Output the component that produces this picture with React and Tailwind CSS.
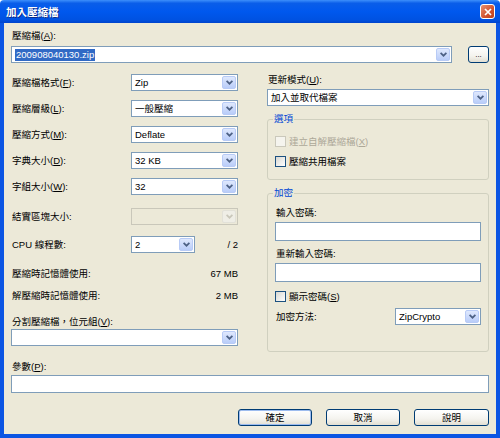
import React from "react";

function Chevron({ disabled }) {
  return (
    <svg width="7" height="5" viewBox="0 0 7 5">
      <path
        d="M0.6 0.8 L3.5 3.7 L6.4 0.8"
        fill="none"
        stroke={disabled ? "#c9c7ba" : "#4d6185"}
        strokeWidth="1.7"
      />
    </svg>
  );
}

function Combo({ value, className = "", disabled = false }) {
  return (
    <div
      className={
        disabled
          ? `flex h-[17px] items-stretch border border-[#c9c7ba] bg-[#ece9d8] p-[1px] ${className}`
          : `flex h-[17px] items-stretch border border-[#7f9db9] bg-white p-[1px] ${className}`
      }
    >
      <div className="flex flex-1 items-center overflow-hidden whitespace-nowrap pl-[2px]">{value}</div>
      {disabled ? (
        <div className="flex w-[14px] items-center justify-center rounded-[2px] border border-[#e2e1d8] bg-[#efeee6]">
          <Chevron disabled />
        </div>
      ) : (
        <div className="flex w-[14px] items-center justify-center rounded-[2px] border border-[#b8cbf6] bg-[linear-gradient(to_bottom,#dfe8fd,#b9cdf9)]">
          <Chevron />
        </div>
      )}
    </div>
  );
}

function Check({ label, disabled = false }) {
  return (
    <div className="flex h-[13px] items-center">
      {disabled ? (
        <div className="h-[11px] w-[11px] border border-[#cac8bb] bg-[#f5f4ee]" />
      ) : (
        <div className="h-[11px] w-[11px] border border-[#1c5180] bg-[linear-gradient(135deg,#d8d8d2,#ffffff)]" />
      )}
      <span className={disabled ? "ml-[3px] text-[#aca899]" : "ml-[3px]"}>{label}</span>
    </div>
  );
}

function Btn({ children, def = false, className = "" }) {
  return (
    <div
      className={
        def
          ? `flex h-[17px] items-center justify-center rounded-[3px] border border-[#003c74] bg-[linear-gradient(to_bottom,#ffffff_0%,#f4f3ee_60%,#e2dfd2_100%)] shadow-[inset_0_0_0_1px_#9dbcef] ${className}`
          : `flex h-[17px] items-center justify-center rounded-[3px] border border-[#003c74] bg-[linear-gradient(to_bottom,#ffffff_0%,#f4f3ee_60%,#e2dfd2_100%)] ${className}`
      }
    >
      {children}
    </div>
  );
}

function U({ children }) {
  return <span className="underline">{children}</span>;
}

function Row({ label, children, className = "" }) {
  return (
    <div className={`flex h-[17px] items-center ${className}`}>
      <div className="w-[120px] pl-[1px]">{label}</div>
      {children}
    </div>
  );
}

export default function App() {
  return (
    <div className="flex h-[438px] w-[500px] flex-col bg-white font-['Liberation_Sans','Noto_Sans_CJK_TC',sans-serif] text-[9.5px] leading-[12px] text-black">
      {/* Title bar */}
      <div className="flex h-[23px] items-center rounded-t-[4px] bg-[linear-gradient(to_bottom,#3d8ffb_0%,#0a5de9_14%,#0058ee_50%,#0052e2_85%,#0044cc_100%)] pl-[6px]">
        <span className="text-[10.5px] font-bold text-white [text-shadow:1px_1px_0_#0b2d8a]">加入壓縮檔</span>
        <div className="ml-auto mr-[5px] flex h-[15px] w-[15px] items-center justify-center rounded-[3px] border border-white bg-[linear-gradient(135deg,#e8906f,#d2522e_60%,#b8401f)]">
          <svg width="8" height="8" viewBox="0 0 8 8">
            <path d="M1 1 L7 7 M7 1 L1 7" stroke="white" strokeWidth="1.7" />
          </svg>
        </div>
      </div>

      {/* Body */}
      <div className="flex flex-1 flex-col border-x-4 border-b-4 border-[#0b55e3] bg-[#ece9d8] px-[7px] pt-[7px]">
        <div className="pl-[1px]">
          壓縮檔(<U>A</U>):
        </div>
        <div className="mt-[4px] flex items-center">
          <Combo
            className="w-[441px]"
            value={<span className="bg-[#316ac5] px-[1px] text-white">200908040130.zip</span>}
          />
          <Btn className="ml-auto w-[21px]">
            <span className="text-[8px] leading-[8px]">...</span>
          </Btn>
        </div>

        <div className="mt-[7px] flex gap-[29px]">
          {/* Left column */}
          <div className="flex w-[227px] flex-col">
            <Row label={<>壓縮檔格式(<U>F</U>):</>} className="mt-[4px]">
              <Combo className="flex-1" value="Zip" />
            </Row>
            <Row label={<>壓縮層級(<U>L</U>):</>} className="mt-[9px]">
              <Combo className="flex-1" value="一般壓縮" />
            </Row>
            <Row label={<>壓縮方式(<U>M</U>):</>} className="mt-[9px]">
              <Combo className="flex-1" value="Deflate" />
            </Row>
            <Row label={<>字典大小(<U>D</U>):</>} className="mt-[9px]">
              <Combo className="flex-1" value="32 KB" />
            </Row>
            <Row label={<>字組大小(<U>W</U>):</>} className="mt-[9px]">
              <Combo className="flex-1" value="32" />
            </Row>
            <Row label="結實區塊大小:" className="mt-[13px]">
              <Combo className="flex-1" value="" disabled />
            </Row>
            <Row label="CPU 線程數:" className="mt-[11px]">
              <Combo className="w-[64px]" value="2" />
              <div className="flex-1 text-right">/ 2</div>
            </Row>
            <div className="mt-[15px] flex justify-between pl-[1px]">
              <span>壓縮時記憶體使用:</span>
              <span>67 MB</span>
            </div>
            <div className="mt-[10px] flex justify-between pl-[1px]">
              <span>解壓縮時記憶體使用:</span>
              <span>2 MB</span>
            </div>
            <div className="mt-[14px] pl-[1px]">
              分割壓縮檔，位元組(<U>V</U>):
            </div>
            <Combo className="mt-[1px]" value="" />
          </div>

          {/* Right column */}
          <div className="flex w-[222px] flex-col">
            <div className="mt-[4px] pl-[1px]">
              更新模式(<U>U</U>):
            </div>
            <Combo className="mt-[3px]" value="加入並取代檔案" />

            <fieldset className="mt-[7px] rounded-[3px] border border-[#d0d0bf] p-0">
              <legend className="ml-[5px] px-[1px] text-[#0046d5]">選項</legend>
              <div className="flex flex-col px-[7px] pb-[11px] pt-[10px]">
                <Check label={<>建立自解壓縮檔(<U>X</U>)</>} disabled />
                <div className="mt-[7px]">
                  <Check label="壓縮共用檔案" />
                </div>
              </div>
            </fieldset>

            <fieldset className="mt-[7px] rounded-[3px] border border-[#d0d0bf] p-0">
              <legend className="ml-[5px] px-[1px] text-[#0046d5]">加密</legend>
              <div className="flex flex-col px-[7px] pb-[26px]">
                <div className="mt-[8px] pl-[1px]">輸入密碼:</div>
                <div className="mt-[3px] h-[19px] border border-[#7f9db9] bg-white" />
                <div className="mt-[7px] pl-[1px]">重新輸入密碼:</div>
                <div className="mt-[3px] h-[19px] border border-[#7f9db9] bg-white" />
                <div className="mt-[8px]">
                  <Check label={<>顯示密碼(<U>S</U>)</>} />
                </div>
                <div className="mt-[5px] flex h-[17px] items-center">
                  <div className="flex-1 pl-[1px]">加密方法:</div>
                  <Combo className="w-[86px]" value="ZipCrypto" />
                </div>
              </div>
            </fieldset>
          </div>
        </div>

        <div className="mt-[9px] pl-[1px]">
          參數(<U>P</U>):
        </div>
        <div className="mt-[2px] h-[18px] border border-[#7f9db9] bg-white" />

        <div className="mt-[16px] flex justify-end gap-[14px]">
          <Btn def className="w-[74px]">確定</Btn>
          <Btn className="w-[74px]">取消</Btn>
          <Btn className="w-[75px]">說明</Btn>
        </div>
      </div>
    </div>
  );
}
